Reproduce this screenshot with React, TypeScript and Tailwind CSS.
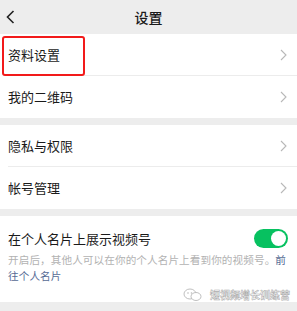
import React from "react";

const Chevron = () => (
  <svg width="7" height="12" viewBox="0 0 7 12" className="shrink-0">
    <path d="M1 1 L6 6 L1 11" fill="none" stroke="#b8b8b8" strokeWidth="1.1" />
  </svg>
);

const Row = ({ label, divider }: { label: string; divider?: boolean }) => (
  <div className="relative h-[42px] flex items-center justify-between pl-[8px] pr-[10px] bg-white">
    <span className="text-[13px] text-[#1a1a1a]">{label}</span>
    <Chevron />
    {divider && <div className="absolute left-[8px] right-0 bottom-0 h-px bg-[#ececec]" />}
  </div>
);

export default function App() {
  return (
    <div
      className="w-[297px] h-[311px] bg-[#ededed] overflow-hidden"
      style={{ fontFamily: '"Noto Sans CJK SC", "Noto Sans", sans-serif' }}
    >
      <div className="h-[34px] grid grid-cols-[40px_1fr_40px] items-center">
        <div className="pl-[6px] flex items-center">
          <svg width="9" height="14" viewBox="0 0 9 14">
            <path d="M7.5 1 L1.5 7 L7.5 13" fill="none" stroke="#222" strokeWidth="1.6" />
          </svg>
        </div>
        <div className="text-center text-[14px] font-medium text-[#1a1a1a]">设置</div>
        <div />
      </div>
      <div className="relative">
        <Row label="资料设置" divider />
        <div className="absolute left-[2px] top-[2px] w-[83px] h-[40px] border-2 border-[#f21a1a] rounded-[3px]" />
      </div>
      <Row label="我的二维码" />
      <div className="h-[7px]" />
      <Row label="隐私与权限" divider />
      <Row label="帐号管理" />
      <div className="h-[7px]" />
      <div className="relative bg-white h-[86px] pl-[8px] pr-[10px] pt-[13px]">
        <div className="flex items-center justify-between h-[19px]">
          <span className="text-[13px] text-[#1a1a1a] leading-[19px]">在个人名片上展示视频号</span>
          <div className="w-[34px] h-[19px] rounded-full bg-[#07c160] relative mr-[-1px]">
            <div className="absolute right-[2px] top-[2px] w-[15px] h-[15px] rounded-full bg-white" />
          </div>
        </div>
        <p className="mt-[4px] text-[10.6px] leading-[16px] text-[#b2b2b2] tracking-[0.1px]">
          开启后，其他人可以在你的个人名片上看到你的视频号。<span className="text-[#576b95]">前往个人名片</span>
        </p>
        <div className="absolute right-[7px] top-[71px] flex items-center gap-[7px]">
          <svg width="20" height="14" viewBox="0 0 20 14">
            <ellipse cx="7" cy="6" rx="6" ry="5" fill="none" stroke="#b8b8b8" strokeWidth="0.9" />
            <ellipse cx="13" cy="8.5" rx="5" ry="4" fill="white" stroke="#b8b8b8" strokeWidth="0.9" />
            <circle cx="5" cy="5" r="0.8" fill="#b8b8b8" />
            <circle cx="8.5" cy="5" r="0.8" fill="#b8b8b8" />
          </svg>
          <span
            className="text-[10px] font-bold text-white"
            style={{ WebkitTextStroke: "0.5px #aaaaaa" }}
          >
            短视频增长训练营
          </span>
        </div>
      </div>
    </div>
  );
}
